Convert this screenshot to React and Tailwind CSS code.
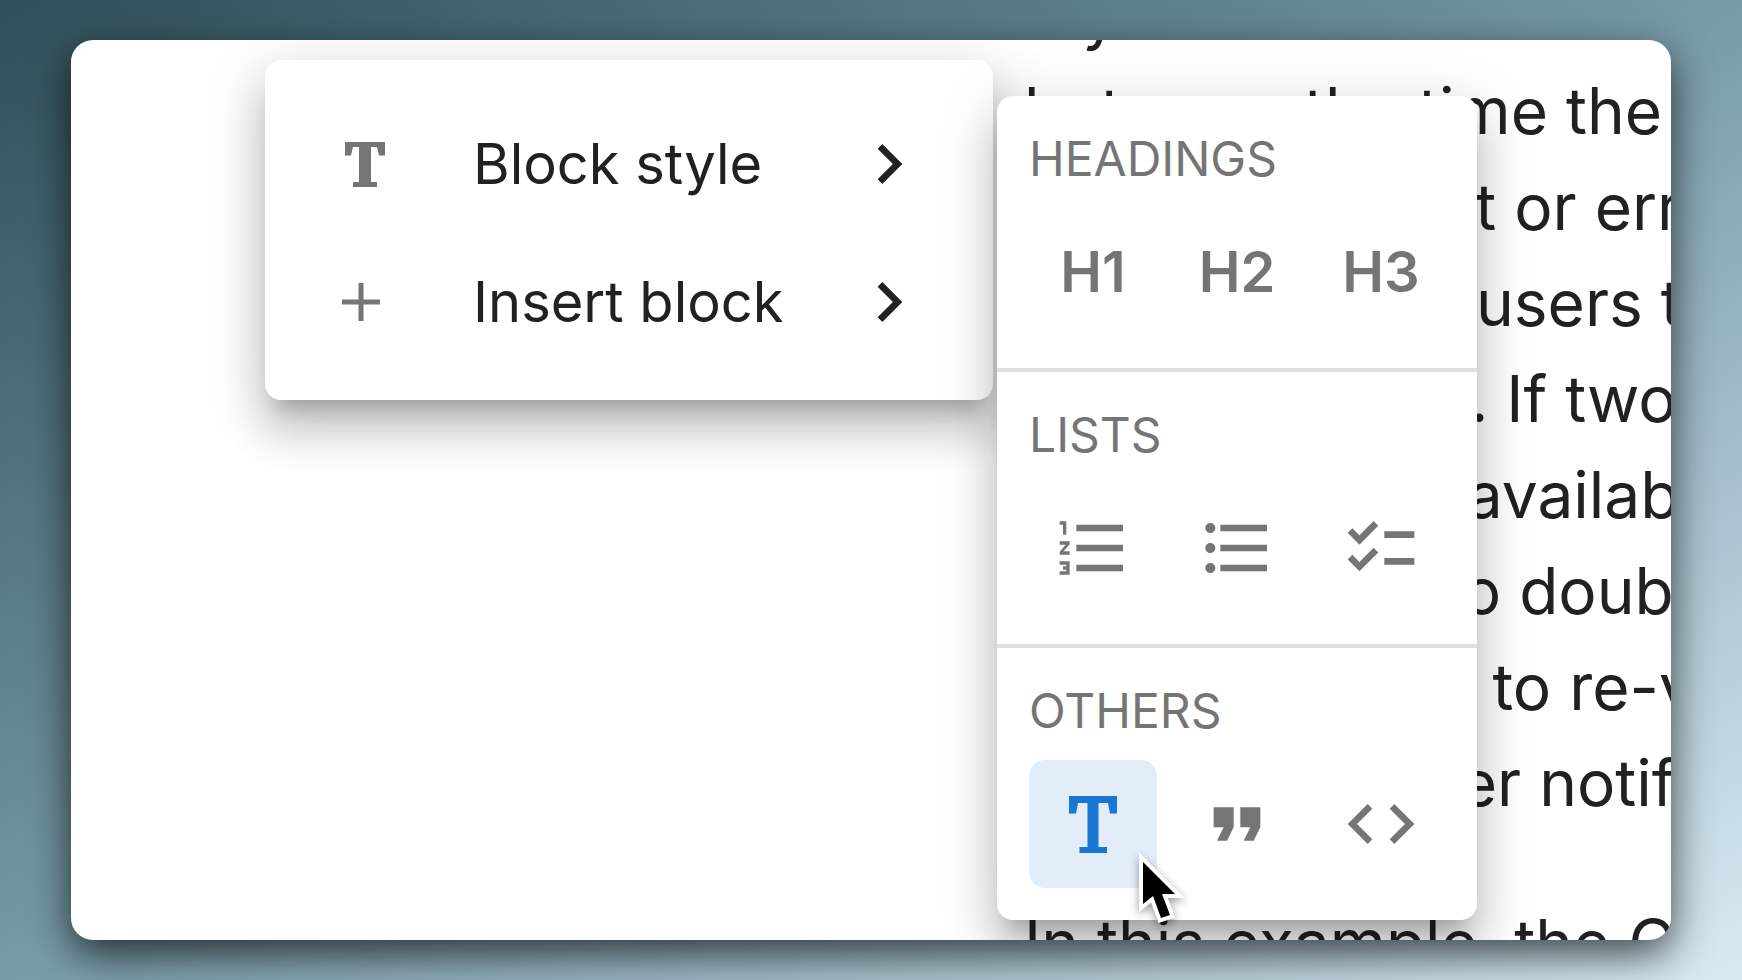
import React, { useState } from 'react';
import {
  MdChecklist,
  MdChevronRight,
  MdCode,
  MdFormatListBulleted,
  MdFormatListNumbered,
  MdFormatQuote,
} from 'react-icons/md';

const paragraphs = [
  [
    'My calendar is shared',
    'between the time the',
    'surface conflict or error',
    'since so many users to',
    'reserve a desk. If two',
    'users see one available',
    'book, and try to double-',
    'room, we need to re-verify',
    'and show a user notification.',
  ],
  ['In this example, the Checkout'],
];

function TextIcon({ className }) {
  return (
    <svg viewBox="0 0 48 58" className={className} fill="currentColor" aria-hidden="true">
      <path d="M0 1H48V18.500H41L39 8H29.500V52H38V58H10.500V52H18.500V8H9L7 18.500H0Z" />
    </svg>
  );
}

// Heavier cut of the text icon for the smaller menu size
function TextIconSmall({ className }) {
  return (
    <svg viewBox="0 0 40 46" className={className} fill="currentColor" aria-hidden="true">
      <path d="M0 1H40V14.500H34L32 6H26V41H32V46H8V41H14V6H8L6 14.500H0Z" />
    </svg>
  );
}

function PlusIcon({ className }) {
  return (
    <svg viewBox="0 0 40 40" className={className} fill="currentColor" aria-hidden="true">
      <path d="M17.500 1h5v16.500H39v5H22.500V39h-5V22.500H1v-5h16.500z" />
    </svg>
  );
}

const menuItems = [
  { label: 'Block style', icon: <TextIconSmall className="ml-4 h-[46px] w-10" /> },
  { label: 'Insert block', icon: <PlusIcon className="ml-3 size-10" /> },
];

const sections = [
  {
    title: 'HEADINGS',
    items: [
      { id: 'h1', label: 'Heading 1', content: 'H1' },
      { id: 'h2', label: 'Heading 2', content: 'H2' },
      { id: 'h3', label: 'Heading 3', content: 'H3' },
    ],
  },
  {
    title: 'LISTS',
    items: [
      { id: 'ol', label: 'Numbered list', content: <MdFormatListNumbered className="size-20" /> },
      { id: 'ul', label: 'Bulleted list', content: <MdFormatListBulleted className="size-20" /> },
      { id: 'todo', label: 'Checklist', content: <MdChecklist className="size-20" /> },
    ],
  },
  {
    title: 'OTHERS',
    items: [
      { id: 'text', label: 'Text', content: <TextIcon className="h-[58px] w-12" /> },
      { id: 'quote', label: 'Quote', content: <MdFormatQuote className="size-20" /> },
      { id: 'code', label: 'Code', content: <MdCode className="size-20" /> },
    ],
  },
];

const menuShadow =
  'shadow-[0_20px_20px_-12px_rgba(0,0,0,0.2),0_32px_40px_4px_rgba(0,0,0,0.14),0_12px_56px_8px_rgba(0,0,0,0.12)]';

function BlockMenu() {
  return (
    <div className={`absolute left-[194px] top-5 w-[728px] rounded-2xl bg-white pt-[35px] pb-[29px] ${menuShadow}`}>
      {menuItems.map((item) => (
        <button key={item.label} className="flex h-[138px] w-full items-center px-16 text-left">
          <span className="w-36 text-[#757575]">{item.icon}</span>
          <span className="flex-1 text-[56px] text-[#212121]">{item.label}</span>
          <MdChevronRight className="size-20 text-[#212121]" />
        </button>
      ))}
    </div>
  );
}

function StyleMenu({ selected, onSelect }) {
  return (
    <div className={`absolute left-[926px] top-14 w-[480px] divide-y-4 divide-[#e0e0e0] rounded-2xl bg-white ${menuShadow}`}>
      {sections.map((section) => (
        <section key={section.title} className="p-8">
          <h2 className="mb-[18px] text-5xl leading-[62px] text-[#757575]">{section.title}</h2>
          <div className="flex gap-4">
            {section.items.map((item) => (
              <button
                key={item.id}
                aria-label={item.label}
                onClick={() => onSelect(item.id)}
                className={`flex size-32 items-center justify-center rounded-2xl text-[56px] font-semibold ${
                  selected === item.id ? 'bg-[#e3edf9] text-[#1976d2]' : 'text-[#757575]'
                }`}
              >
                {item.content}
              </button>
            ))}
          </div>
        </section>
      ))}
    </div>
  );
}

function Cursor() {
  return (
    <svg
      viewBox="0 0 48 76"
      className="pointer-events-none absolute left-[1067px] top-[811px] h-[76px] w-12 overflow-visible drop-shadow-[0_3px_4px_rgba(0,0,0,0.4)]"
      aria-hidden="true"
    >
      <path
        d="M5 11V53L15 45L23 67L32 64L24 43H37Z"
        fill="#000"
        stroke="#fff"
        strokeWidth="8"
        paintOrder="stroke"
      />
    </svg>
  );
}

export default function App() {
  const [selected, setSelected] = useState('text');

  return (
    <div className="flex h-screen bg-linear-to-br from-[#2f4e57] via-[#789ba7] to-[#d8ebf4] px-[71px] py-10 font-['Inter',sans-serif]">
      <main className="relative flex-1 overflow-hidden rounded-[22px] bg-white shadow-[0_14px_40px_rgba(0,0,0,0.7)]">
        <article className="-mt-[73px] ml-[953px] space-y-16 whitespace-nowrap text-[64px] leading-[96px] text-[#212121]">
          {paragraphs.map((lines) => (
            <p key={lines[0]}>
              {lines.map((line) => (
                <span key={line} className="block">{line}</span>
              ))}
            </p>
          ))}
        </article>
        <BlockMenu />
        <StyleMenu selected={selected} onSelect={setSelected} />
        <Cursor />
      </main>
    </div>
  );
}
